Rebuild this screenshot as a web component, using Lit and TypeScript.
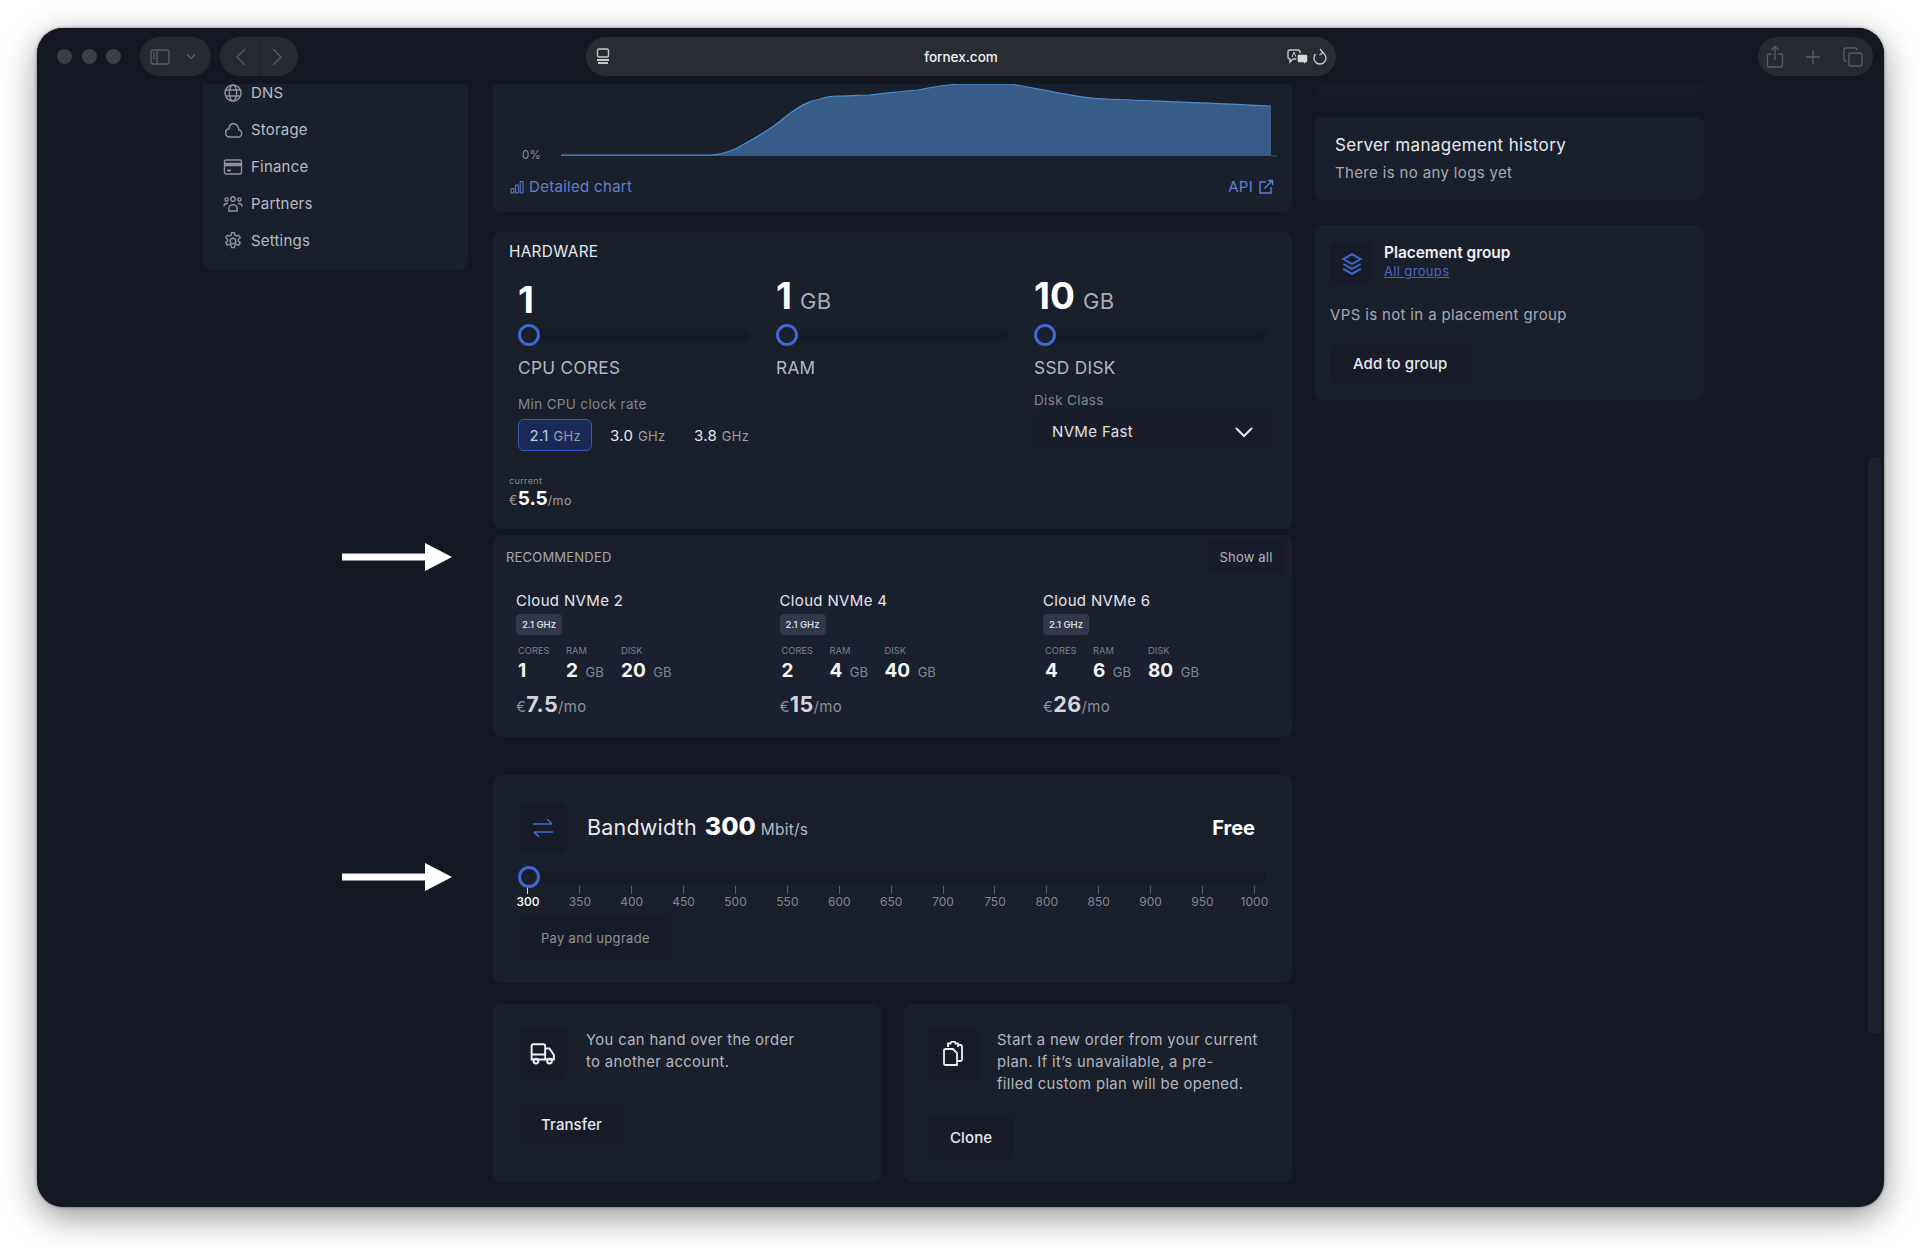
import { LitElement, css, html, svg } from 'lit'
import { customElement } from 'lit/decorators.js'

const menu = [
  { name: 'DNS', icon: svg`<circle cx="10" cy="10" r="8"/><ellipse cx="10" cy="10" rx="3.6" ry="8"/><path d="M2.6 7h14.8M2.6 13h14.8"/>` },
  { name: 'Storage', icon: svg`<path d="M5.5 17h9.5a3.7 3.700 0 0 0 .8-7.3A6 6 0 0 0 10 3.500a5.500 5.500 0 0 0-4 5.200A4.300 4.300 0 0 0 5.500 17z"/>` },
  { name: 'Finance', icon: svg`<rect x="1.500" y="3" width="17" height="14" rx="1.500"/><path d="M1.500 7.500h17" stroke-width="3.400"/><path d="M4 13.500h4" stroke-width="2"/>` },
  { name: 'Partners', icon: svg`<circle cx="10" cy="5" r="2.200"/><circle cx="3.600" cy="5.600" r="1.700"/><circle cx="16.400" cy="5.600" r="1.700"/><path d="M5.800 17v-2.600c0-2 1.800-3.600 4.200-3.600s4.200 1.600 4.200 3.600V17z"/><path d="M1 12.500c0-1.800 1.200-3 3-3h1M19 12.500c0-1.800-1.200-3-3-3h-1"/>` },
  { name: 'Settings', icon: svg`<circle cx="10" cy="10" r="2.800"/><path d="M8.600 1.800h2.800l.5 2.400 1.600.9 2.300-.8 1.400 2.400-1.800 1.600v1.800l1.800 1.600-1.400 2.400-2.300-.8-1.600.9-.5 2.400H8.600l-.5-2.400-1.600-.9-2.300.8-1.400-2.400 1.800-1.600V8.300L2.800 6.700l1.400-2.400 2.300.8 1.600-.9z"/>` },
]

const plans = [
  { name: 'Cloud NVMe 2', cores: 1, ram: 2, disk: 20, price: '7.5' },
  { name: 'Cloud NVMe 4', cores: 2, ram: 4, disk: 40, price: '15' },
  { name: 'Cloud NVMe 6', cores: 4, ram: 6, disk: 80, price: '26' },
]

const ticks = Array.from({ length: 15 }, (_, i) => 300 + i * 50)

@customElement('app-root')
export class AppRoot extends LitElement {
  private toolbar() {
    return html`
      <header class="toolbar">
        <div class="dots"><i></i><i></i><i></i></div>
        <div class="pill side">
          <svg width="20" height="18" viewBox="0 0 20 18"><rect x="1" y="2" width="18" height="14" rx="2.500"/><path d="M7 2v14M3 5.500h2M3 8h2M3 10.500h2"/></svg>
          <svg width="10" height="7" viewBox="0 0 10 7"><path d="M1 1.500l4 4 4-4"/></svg>
        </div>
        <div class="pill nav">
          <svg width="12" height="20" viewBox="0 0 12 20"><path d="M10 2L2 10l8 8"/></svg>
          <span class="divider"></span>
          <svg width="12" height="20" viewBox="0 0 12 20"><path d="M2 2l8 8-8 8"/></svg>
        </div>
        <div class="address">
          <svg class="site" width="14" height="18" viewBox="0 0 14 18"><rect x="1.500" y="1" width="11" height="8" rx="1.500"/><path d="M1 12h12M2 15h10" stroke-width="1.800"/></svg>
          <span class="url">fornex.com</span>
          <svg class="translate" width="22" height="18" viewBox="0 0 22 18">
            <path d="M3 2h8a2 2 0 0 1 2 2v5a2 2 0 0 1-2 2H6l-3 3v-3a2 2 0 0 1-2-2V4a2 2 0 0 1 2-2z"/>
            <path d="M5 9l2-5 2 5" stroke-width="1"/>
            <path class="solid" d="M12 6h7a2 2 0 0 1 2 2v5a2 2 0 0 1-2 2v2l-3-2h-4a2 2 0 0 1-2-2V8a2 2 0 0 1 2-2z"/>
          </svg>
          <svg class="reload" width="16" height="18" viewBox="0 0 16 18"><path d="M10.500 4.600A6 6 0 1 1 3.500 6"/><path d="M8 1l3 3.600-3.500 2.400"/></svg>
        </div>
        <div class="pill tools">
          <svg width="18" height="24" viewBox="0 0 18 24"><path d="M5.500 9H3a1.500 1.500 0 0 0-1.500 1.500v10A1.500 1.500 0 0 0 3 22h12a1.500 1.500 0 0 0 1.500-1.500v-10A1.500 1.500 0 0 0 15 9h-2.500M9 15V2M5.500 5L9 1.500 12.500 5"/></svg>
          <svg width="16" height="16" viewBox="0 0 16 16"><path d="M8 1v14M1 8h14"/></svg>
          <svg width="20" height="20" viewBox="0 0 20 20"><rect x="6" y="6" width="13" height="13" rx="2"/><path d="M14 3.500V3a2 2 0 0 0-2-2H3a2 2 0 0 0-2 2v9a2 2 0 0 0 2 2h.5"/></svg>
        </div>
      </header>
    `
  }

  private sidebar() {
    return html`
      <nav class="card sidebar">
        ${menu.map(
          (m) => html`
            <a class="menu-item">
              <svg width="20" height="20" viewBox="0 0 20 20">${m.icon}</svg>
              ${m.name}
            </a>
          `,
        )}
      </nav>
    `
  }

  private chart() {
    // coordinates are page pixels minus the card origin (493, 80)
    const top =
      'M68 75 L217 75 C226 75 235 72 242 69 C258 60 275 52 291 38 C305 27 315 21 327 19 C335 16 340 16 346 16 C360 16 368 15 377 15 C395 13 410 11 425 10 C440 7 452 5 467 4 L516 4 C548 8 585 19 614 19 C660 21 720 23 778 26'
    return html`
      <section class="card chart-card">
        <svg class="chart" width="799" height="86" viewBox="0 0 799 86">
          <path class="area" d="${top} L778 76 L68 76 Z" />
          <path class="line" d="${top}" />
          <path class="axis" d="M778 76h6" />
          <text x="29" y="79">0%</text>
        </svg>
        <div class="chart-links">
          <a class="link">
            <svg class="bars" width="14" height="14" viewBox="0 0 14 14"><path d="M1 13V8.500h2.800V13zM5.600 13V5h2.800v8zM10.200 13V1.500H13V13z"/></svg>
            Detailed chart
          </a>
          <a class="link">
            API
            <svg width="16" height="16" viewBox="0 0 16 16"><path d="M8 3H2v11h11V8M6.500 9.500L14.500 1.500M10 1.500h4.500V6"/></svg>
          </a>
        </div>
      </section>
    `
  }

  private slider() {
    return html`<div class="slider"><span class="knob"></span></div>`
  }

  private hardware() {
    return html`
      <section class="card hardware">
        <h3 class="title">HARDWARE</h3>
        <div class="hw-grid">
          <div>
            <div class="hw-value low"><b>1</b></div>
            ${this.slider()}
            <div class="hw-label">CPU CORES</div>
            <div class="hint clock">Min CPU clock rate</div>
            <div class="clocks">
              <button class="clock-btn active">2.1 <small>GHz</small></button>
              <button class="clock-btn">3.0 <small>GHz</small></button>
              <button class="clock-btn">3.8 <small>GHz</small></button>
            </div>
          </div>
          <div>
            <div class="hw-value"><b>1</b> <span>GB</span></div>
            ${this.slider()}
            <div class="hw-label">RAM</div>
          </div>
          <div>
            <div class="hw-value"><b>10</b> <span>GB</span></div>
            ${this.slider()}
            <div class="hw-label">SSD DISK</div>
            <div class="hint disk">Disk Class</div>
            <div class="select">
              NVMe Fast
              <svg width="20" height="12" viewBox="0 0 20 12"><path d="M2 2l8 8 8-8"/></svg>
            </div>
          </div>
        </div>
        <div class="current">current</div>
        <div class="current-price"><span>€</span><b>5.5</b><span>/mo</span></div>
      </section>
    `
  }

  private recommended() {
    return html`
      <section class="card recommended">
        <div class="rec-head">
          <span>RECOMMENDED</span>
          <button class="show-all">Show all</button>
        </div>
        <div class="plans">
          ${plans.map(
            (p) => html`
              <article class="plan">
                <div class="plan-name">${p.name}</div>
                <div class="chip">2.1 GHz</div>
                <div class="specs">
                  <label>CORES</label><label>RAM</label><label>DISK</label>
                  <b>${p.cores}</b>
                  <b>${p.ram} <span>GB</span></b>
                  <b>${p.disk} <span>GB</span></b>
                </div>
                <div class="plan-price"><span>€</span><b>${p.price}</b><span>/mo</span></div>
              </article>
            `,
          )}
        </div>
      </section>
    `
  }

  private bandwidth() {
    return html`
      <section class="card bandwidth">
        <div class="bw-head">
          <div class="icon-box blue">
            <svg width="24" height="22" viewBox="0 0 24 22"><path d="M2 7h19M16 2l5 5M22 15H3M8 20l-5-5"/></svg>
          </div>
          <div class="bw-title">Bandwidth <b>300</b> <span>Mbit/s</span></div>
          <div class="free">Free</div>
        </div>
        ${this.slider()}
        <div class="ticks">
          ${ticks.map(
            (t, i) => html`
              <div class="tick ${i === 0 ? 'on' : ''}"><i></i><span>${t}</span></div>
            `,
          )}
        </div>
        <button class="btn muted">Pay and upgrade</button>
      </section>
    `
  }

  private actions() {
    return html`
      <div class="actions">
        <section class="card action">
          <div class="action-row">
            <div class="icon-box">
              <svg class="bold" width="26" height="24" viewBox="0 0 24 22"><path d="M1.500 3.500A1.500 1.500 0 0 1 3 2h9.500A1.500 1.500 0 0 1 14 3.500V16H1.500zM1.500 11.500H14M14 6h4l4 6v4h-8"/><circle cx="5.500" cy="17.500" r="2.200"/><circle cx="18" cy="17.500" r="2.200"/></svg>
            </div>
            <p>You can hand over the order<br />to another account.</p>
          </div>
          <button class="btn">Transfer</button>
        </section>
        <section class="card action">
          <div class="action-row">
            <div class="icon-box wide">
              <svg class="bold" width="20" height="26" viewBox="0 0 20 26"><path d="M6 5H5V2.500h2.500a2.500 2 0 0 1 5 0H15V5h-1M15 4h2.500A1.500 1.500 0 0 1 19 5.500v13a1.500 1.500 0 0 1-1.500 1.500H14"/><path d="M2.500 8H10l4 4v12H2.500A1.500 1.500 0 0 1 1 22.500v-13A1.500 1.500 0 0 1 2.500 8z"/></svg>
            </div>
            <p>Start a new order from your current<br />plan. If it’s unavailable, a pre-<br />filled custom plan will be opened.</p>
          </div>
          <button class="btn">Clone</button>
        </section>
      </div>
    `
  }

  private rightColumn() {
    return html`
      <aside class="right">
        <div class="card sliver"></div>
        <section class="card history">
          <h3>Server management history</h3>
          <p>There is no any logs yet</p>
        </section>
        <section class="card placement">
          <div class="pl-head">
            <div class="icon-box small blue">
              <svg width="24" height="24" viewBox="0 0 22 22"><path d="M11 2l8 4.500-8 4.500-8-4.500zM3 11l8 4.500 8-4.500M3 15.500L11 20l8-4.500"/></svg>
            </div>
            <div>
              <div class="pl-title">Placement group</div>
              <a class="pl-link">All groups</a>
            </div>
          </div>
          <p>VPS is not in a placement group</p>
          <button class="btn add">Add to group</button>
        </section>
      </aside>
    `
  }

  protected render() {
    return html`
      <div class="window">
        ${this.toolbar()}
        <main class="content">
          ${this.sidebar()}
          <div class="column">
            ${this.chart()} ${this.hardware()} ${this.recommended()} ${this.bandwidth()} ${this.actions()}
          </div>
          ${this.rightColumn()}
        </main>
        <svg class="arrow one" width="110" height="28" viewBox="0 0 110 28"><path d="M0 10.500h83V0l27 14-27 14V17.500H0z"/></svg>
        <svg class="arrow two" width="110" height="28" viewBox="0 0 110 28"><path d="M0 10.500h83V0l27 14-27 14V17.500H0z"/></svg>
        <span class="scrollbar"></span>
      </div>
    `
  }

  static styles = css`
    :host {
      display: block;
      width: 1920px;
      height: 1253px;
      padding: 28px 36px 46px 37px;
      box-sizing: border-box;
      background: #fff;
      font-family: Inter, 'Noto Sans', sans-serif;
      letter-spacing: 0.35px;
      color: #b6b9c1;
    }

    * {
      box-sizing: border-box;
    }

    svg {
      display: block;
      flex: none;
      fill: none;
      stroke: currentColor;
      stroke-width: 1.4;
    }

    svg.bold {
      stroke-width: 1.800;
    }

    button {
      font: inherit;
      letter-spacing: inherit;
      border: none;
    }

    h3,
    p {
      margin: 0;
      font-weight: 400;
    }

    .window {
      position: relative;
      height: 100%;
      overflow: hidden;
      border-radius: 26px;
      background: #141823;
      box-shadow: 0 10px 34px rgba(0, 0, 0, 0.42), 0 0 3px rgba(0, 0, 0, 0.5), inset 0 2px 0 #3a3c42;
    }

    .toolbar {
      height: 56px;
      display: flex;
      align-items: flex-start;
      padding-top: 9px;
      background: #141823;
      position: relative;
      z-index: 2;
    }

    .dots {
      display: flex;
      gap: 9.500px;
      margin: 12px 0 0 20px;
    }

    .dots i {
      width: 15px;
      height: 15px;
      border-radius: 50%;
      background: #3c3f48;
    }

    .pill {
      height: 39px;
      border-radius: 20px;
      background: #262a33;
      display: flex;
      align-items: center;
      color: #585c65;
    }

    .side {
      width: 71px;
      margin-left: 19px;
      padding-left: 10px;
      gap: 16px;
    }

    .nav {
      width: 78px;
      margin-left: 9px;
      justify-content: center;
      gap: 11.500px;
    }

    .divider {
      width: 1px;
      height: 39px;
      background: #1e2128;
    }

    .address {
      width: 750px;
      height: 39px;
      margin-left: 288px;
      padding: 0 8px 0 10px;
      border-radius: 20px;
      background: #2a2c33;
      display: flex;
      align-items: center;
      color: #c6c7cb;
    }

    .url {
      flex: 1;
      text-align: center;
      color: #f2f2f4;
      font-size: 13.500px;
      font-weight: 500;
      letter-spacing: 0;
      margin-left: 25px;
    }

    .translate {
      margin-right: 3px;
    }

    .translate .solid {
      fill: #d6d7da;
      stroke: #2a2c33;
    }

    .tools {
      width: 115px;
      margin-left: 422px;
      padding: 0 10.500px 0 8px;
      justify-content: space-between;
    }

    .content {
      display: grid;
      grid-template-columns: 266px 799px 387px;
      column-gap: 25px;
      align-items: start;
      padding-left: 165px;
      margin-top: -4px;
    }

    .content > .right {
      margin-left: -3px;
    }

    .card {
      background: #1a1f2c;
      border-radius: 8px;
    }

    .sidebar {
      height: 190px;
      overflow: hidden;
      border-radius: 0 0 10px 10px;
      padding-left: 21px;
    }

    .menu-item {
      height: 37px;
      display: flex;
      align-items: center;
      gap: 8px;
      font-size: 15px;
      letter-spacing: 0.2px;
      color: #b9bcc4;
    }

    .menu-item:first-child {
      margin-top: -6px;
    }

    .menu-item svg {
      color: #8f939d;
    }

    .chart-card {
      height: 132px;
      border-radius: 0 0 8px 8px;
      overflow: hidden;
    }

    .chart .area {
      fill: #365c87;
      stroke: none;
    }

    .chart .line {
      stroke: #4d8fd4;
      stroke-width: 1.200;
    }

    .chart .axis {
      stroke: #3a4152;
    }

    .chart text {
      font-size: 11.500px;
      fill: #8a8d95;
      stroke: none;
    }

    .chart-links {
      display: flex;
      justify-content: space-between;
      padding: 12px 18px 0 17px;
      margin-top: -1px;
    }

    .link {
      display: flex;
      align-items: center;
      gap: 5px;
      font-size: 15px;
      letter-spacing: 0.3px;
      color: #5f7fd0;
      line-height: 20px;
    }

    .link .bars {
      stroke-width: 1;
    }

    .hardware {
      margin-top: 20px;
      height: 297px;
      padding: 11px 16px 0;
    }

    .title {
      font-size: 15.300px;
      line-height: 18px;
      color: #e8e9ec;
    }

    .hw-grid {
      display: grid;
      grid-template-columns: repeat(3, 232px);
      column-gap: 26px;
      padding-left: 9px;
      margin-top: 15px;
      height: 175px;
    }

    .hw-value {
      height: 40px;
      display: flex;
      align-items: baseline;
      gap: 8px;
      font-size: 22px;
      line-height: 40px;
      color: #a9acb5;
    }

    .hw-value b {
      font-size: 37px;
      font-weight: 700;
      color: #fff;
      letter-spacing: 0;
    }

    .hw-value.low {
      padding-top: 4px;
    }

    .slider {
      position: relative;
      height: 22px;
      margin-top: 8px;
      display: flex;
      align-items: center;
    }

    .slider::before {
      content: '';
      width: 100%;
      height: 12px;
      border-radius: 6px;
      background: #161a25;
    }

    .knob {
      position: absolute;
      left: 0;
      top: 0;
      width: 22px;
      height: 22px;
      border-radius: 50%;
      border: 3px solid #3f68d2;
      background: #1a1f2c;
    }

    .hw-label {
      margin-top: 11px;
      font-size: 17.200px;
      line-height: 22px;
      color: #b6b9c1;
    }

    .hint {
      font-size: 13.500px;
      line-height: 16px;
      color: #83868f;
    }

    .hint.clock {
      margin-top: 17px;
    }

    .hint.disk {
      margin-top: 13px;
    }

    .clocks {
      display: flex;
      margin-top: 7px;
    }

    .clock-btn {
      flex: none;
      height: 32px;
      width: 84px;
      padding: 0 0 0 12px;
      border-radius: 6px;
      background: none;
      color: #e6e7ea;
      font-size: 15px;
      white-space: nowrap;
      text-align: left;
    }

    .clock-btn small {
      font-size: 13px;
      color: #9a9da6;
    }

    .clock-btn.active {
      width: 74px;
      margin-right: 6px;
      padding-left: 10.500px;
      background: #1a2a57;
      border: 1.500px solid #3958bf;
      color: #c4cde6;
    }

    .select {
      height: 37px;
      margin: 5px -8px 0 0;
      padding: 0 20px 0 18px;
      display: flex;
      align-items: center;
      justify-content: space-between;
      border-radius: 6px;
      background: #191d2a;
      color: #e0e1e5;
      font-size: 15px;
    }

    .select svg {
      stroke-width: 2;
      color: #e6e7ea;
    }

    .current {
      margin-top: 24px;
      font-size: 9px;
      line-height: 12px;
      color: #85888f;
    }

    .current-price {
      display: flex;
      align-items: baseline;
      line-height: 22px;
      margin-top: 1px;
      font-size: 12.500px;
      color: #9a9da6;
    }

    .current-price b {
      font-size: 19px;
      color: #fff;
      letter-spacing: 0;
    }

    .recommended {
      margin-top: 6px;
      height: 202px;
      padding: 4px 7px 0 13px;
    }

    .rec-head {
      height: 35px;
      display: flex;
      align-items: center;
      justify-content: space-between;
      font-size: 13px;
      letter-spacing: 0.2px;
      color: #a6a9b1;
    }

    .show-all {
      height: 35px;
      width: 78px;
      border-radius: 6px;
      background: #181c28;
      color: #b4b7bf;
      font-size: 13px;
      padding: 0;
    }

    .plans {
      display: grid;
      grid-template-columns: repeat(3, 255px);
      column-gap: 8.500px;
      margin: 3px 0 0 2px;
    }

    .plan {
      height: 145px;
      padding: 14px 8px 0;
      border-radius: 6px;
      background: #1a202d;
    }

    .plan-name {
      font-size: 15px;
      line-height: 20px;
      color: #e4e5e9;
    }

    .chip {
      width: 46px;
      height: 21px;
      margin-top: 3px;
      border-radius: 4px;
      background: #33374a;
      color: #d5d7de;
      font-size: 9.500px;
      font-weight: 600;
      letter-spacing: 0;
      line-height: 21px;
      text-align: center;
    }

    .specs {
      display: grid;
      grid-template-columns: 48px 55px auto;
      margin: 10px 0 0 2px;
    }

    .specs label {
      font-size: 9.300px;
      line-height: 12px;
      letter-spacing: 0;
      color: #7d8089;
      margin-bottom: 3px;
    }

    .specs b {
      font-size: 19px;
      line-height: 22px;
      color: #f4f4f6;
      letter-spacing: 0;
    }

    .specs b span {
      font-size: 13px;
      font-weight: 400;
      color: #858891;
      margin-left: 3px;
    }

    .plan-price {
      display: flex;
      align-items: baseline;
      margin-top: 9px;
      line-height: 24px;
      font-size: 15px;
      color: #8d9099;
    }

    .plan-price b {
      font-size: 21.500px;
      color: #d3d5db;
    }

    .bandwidth {
      margin-top: 38px;
      height: 208px;
      padding: 27px 25px 0;
    }

    .bw-head {
      display: flex;
      align-items: center;
      padding-left: 1px;
      color: #fff;
    }

    .icon-box {
      width: 48px;
      height: 52px;
      flex: none;
      display: flex;
      align-items: center;
      justify-content: center;
      border-radius: 8px;
      background: #181c28;
      color: #eef0f3;
    }

    .icon-box.wide {
      width: 52px;
    }

    .icon-box.small {
      width: 43px;
      height: 43px;
    }

    .icon-box.blue {
      color: #4169cf;
    }

    .icon-box.blue svg {
      stroke-width: 1.700;
    }

    .bw-title {
      margin: -4px 0 0 20px;
      flex: 1;
      font-size: 21.500px;
      color: #e8e9ec;
      letter-spacing: 0.2px;
      display: flex;
      align-items: baseline;
      gap: 5px;
    }

    .bw-title b {
      font-size: 25px;
      font-weight: 800;
      color: #fff;
      letter-spacing: 0;
      margin-left: 3px;
    }

    .bw-title span {
      font-size: 15.500px;
      color: #b6b9c1;
    }

    .free {
      font-size: 20px;
      font-weight: 700;
      color: #fff;
      letter-spacing: 0;
      margin-right: 12px;
    }

    .bandwidth .slider {
      margin-top: 12px;
    }

    .ticks {
      display: grid;
      grid-template-columns: repeat(15, 51.900px);
      margin: -2px 0 0 -16px;
    }

    .tick {
      display: flex;
      flex-direction: column;
      align-items: center;
      font-size: 12px;
      line-height: 14px;
      letter-spacing: 0;
      color: #83868f;
    }

    .tick i {
      width: 1px;
      height: 8px;
      margin-bottom: 1px;
      background: #5a5e68;
    }

    .tick.on {
      color: #fff;
      font-weight: 500;
    }

    .tick.on i {
      background: #d8dae0;
    }

    .btn {
      display: block;
      height: 41px;
      padding: 0 22px;
      border-radius: 8px;
      background: #181c28;
      color: #e6e8ec;
      font-size: 15px;
      font-weight: 500;
      letter-spacing: 0.1px;
    }

    .btn.muted {
      height: 42px;
      margin: 8px 0 0 1px;
      color: #8f929b;
      font-size: 13px;
      font-weight: 400;
      letter-spacing: 0.3px;
    }

    .actions {
      display: grid;
      grid-template-columns: 388px 388px;
      column-gap: 23px;
      margin-top: 21px;
    }

    .action {
      height: 178px;
      padding: 24px 26px 0;
    }

    .action + .action {
      padding-left: 23px;
    }

    .action-row {
      display: flex;
      gap: 19px;
    }

    .action + .action .action-row {
      gap: 18px;
    }

    .action p {
      margin-top: 1px;
      font-size: 14.850px;
      line-height: 22px;
      color: #b4b7bf;
      white-space: nowrap;
    }

    .action .btn {
      margin-top: 24px;
    }

    .action + .action .btn {
      margin: 20px 0 0 1px;
      height: 44px;
    }

    .sliver {
      height: 17px;
      border-radius: 0 0 8px 8px;
      background: #161a25;
    }

    .history {
      margin-top: 20px;
      height: 83px;
      padding: 17px 21px 0;
    }

    .history h3 {
      font-size: 17px;
      line-height: 22px;
      color: #e8e9ec;
    }

    .history p {
      margin-top: 7px;
      font-size: 15px;
      line-height: 20px;
      color: #a7aab2;
    }

    .placement {
      margin-top: 25px;
      height: 175px;
      padding: 17px 16px 0;
    }

    .pl-head {
      display: flex;
      gap: 11px;
    }

    .pl-title {
      margin-top: 2px;
      font-size: 15.400px;
      line-height: 18px;
      font-weight: 600;
      color: #f0f1f3;
      letter-spacing: 0;
    }

    .pl-link {
      display: block;
      font-size: 13px;
      line-height: 18px;
      color: #4a66c4;
      text-decoration: underline;
    }

    .placement p {
      margin-top: 20px;
      font-size: 15px;
      line-height: 20px;
      color: #a7aab2;
    }

    .btn.add {
      width: 143px;
      height: 40px;
      margin-top: 18px;
      padding-left: 23px;
      text-align: left;
    }

    .arrow {
      position: absolute;
      left: 305px;
      fill: #fff;
      stroke: none;
    }

    .arrow.one {
      top: 515px;
    }

    .arrow.two {
      top: 835px;
    }

    .scrollbar {
      position: absolute;
      left: 1831px;
      top: 429px;
      width: 13px;
      height: 577px;
      border-radius: 5px;
      background: #1e2230;
    }
  `
}
